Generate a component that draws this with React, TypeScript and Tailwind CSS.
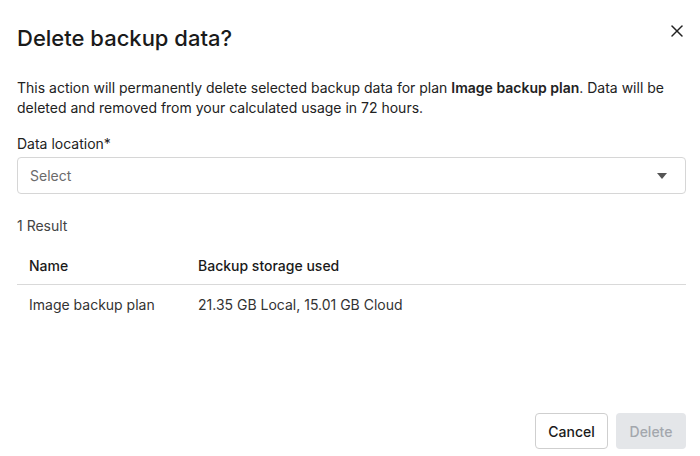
import { X } from "lucide-react";

const rows = [
  { name: "Image backup plan", storage: "21.35 GB Local, 15.01 GB Cloud" },
];

export default function App() {
  return (
    <div className="h-[456px] w-[700px] bg-white font-['Inter','Noto_Sans',sans-serif] text-[#1f1f1f] flex flex-col pl-[17px] pr-[14px] pt-[24px] pb-[7px]">
      {/* Header */}
      <div className="flex items-start justify-between">
        <h1 className="text-[22px] leading-[28px] font-medium text-[#1a1a1a]">
          Delete backup data?
        </h1>
        <button type="button" className="mt-[-3px] mr-[-1px] text-[#222]" aria-label="Close">
          <X className="w-[20px] h-[20px]" strokeWidth={1.8} />
        </button>
      </div>

      {/* Description */}
      <p className="mt-[26px] text-[14px] leading-[20px] text-[#222]">
        This action will permanently delete selected backup data for plan{" "}
        <span className="font-semibold">Image backup plan</span>. Data will be
        deleted and removed from your calculated usage in 72 hours.
      </p>

      {/* Select */}
      <label className="mt-[16px] text-[14px] leading-[20px] text-[#222]">
        Data location*
      </label>
      <div className="mt-[3px] h-[37px] rounded-[4px] border border-[#d6d6d6] flex items-center justify-between pl-[12px] pr-[18px]">
        <span className="text-[14px] text-[#6b6b6b]">Select</span>
        <svg width="10" height="6" viewBox="0 0 10 6" className="text-[#555]">
          <path d="M0 0h10L5 6z" fill="currentColor" />
        </svg>
      </div>

      {/* Results */}
      <div className="mt-[22px] text-[14px] leading-[20px] text-[#444]">1 Result</div>

      <table className="mt-[12px] w-full text-[14px] text-left">
        <thead>
          <tr className="border-b border-[#d9d9d9]">
            <th className="h-[36px] pl-[12px] w-[181px] font-medium text-[#1a1a1a]">Name</th>
            <th className="h-[36px] font-medium text-[#1a1a1a]">Backup storage used</th>
          </tr>
        </thead>
        <tbody>
          {rows.map((r) => (
            <tr key={r.name}>
              <td className="h-[40px] pl-[12px] text-[#333]">{r.name}</td>
              <td className="h-[40px] text-[#333]">{r.storage}</td>
            </tr>
          ))}
        </tbody>
      </table>

      {/* Footer */}
      <div className="mt-auto flex justify-end gap-[8px]">
        <button
          type="button"
          className="h-[36px] w-[73px] rounded-[4px] border border-[#cfcfcf] bg-white text-[14px] font-medium text-[#1a1a1a]"
        >
          Cancel
        </button>
        <button
          type="button"
          disabled
          className="h-[36px] w-[70px] rounded-[4px] bg-[#e4e6e9] text-[14px] font-medium text-[#a3a7ad]"
        >
          Delete
        </button>
      </div>
    </div>
  );
}
